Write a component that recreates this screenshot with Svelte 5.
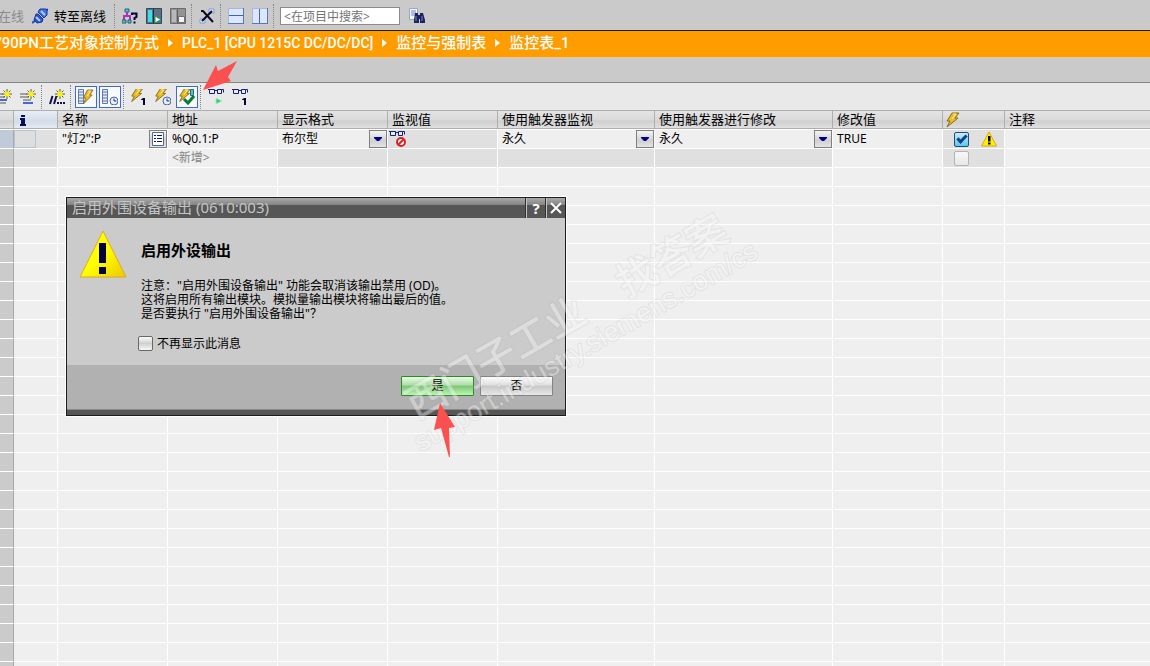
<script>
  let search = $state('');
  let enabled = $state(true);
  let enabledNew = $state(false);
  let dontShow = $state(false);
  let format = $state('布尔型');
  let monitor = $state('永久');
  let modify = $state('永久');

  const crumbs = [
    { text: 'V90PN工艺对象控制方式' },
    { text: 'PLC_1 [CPU 1215C DC/DC/DC]', device: true },
    { text: '监控与强制表' },
    { text: '监控表_1' }
  ];
  const widths = [14, 44, 110, 110, 110, 110, 157, 178, 110, 62];
  const emptyRows = Array.from({ length: 27 }, (_, i) => i);
</script>

{#snippet bolt()}
  <path d="M8 1h7l-4 5h3L3 15l3-6H3z" fill="#e8bd24" stroke="#8a6a12" />
  <path d="M9 2h3L8 7" fill="none" stroke="#fff3a0" />
{/snippet}

{#snippet star()}
  <path d="M11 0v10M6 5h10M7.500 1.500l7 7M14.500 1.500l-7 7" stroke="#5c6414" />
  <circle cx="11" cy="5" r="2.500" fill="#fff200" />
{/snippet}

{#snippet clock()}
  <circle cx="12" cy="12" r="4" fill="#e8f0ff" stroke="#4460b8" />
  <path d="M12 9.500V12h2.500" fill="none" stroke="#203080" />
{/snippet}

{#snippet glasses()}
  <path
    d="M1.500 2.500h5v4h-5zM9.500 2.500h4v4h-4zM6.500 3.500h3M13.500 2.500h2v3M1.500 2.500H0"
    fill="#e8ecff"
    stroke="#14206c"
  />
{/snippet}

{#snippet one()}
  <path d="M10 10.500l2-1.500h2v7h-2v-5h-2z" fill="#05053c" />
{/snippet}

{#snippet warning()}
  <path d="M8 1l7.500 14H.5z" fill="#fff000" stroke="#d8a810" />
  <path d="M7 5h2.500v5.500H7zM7 11.500h2.500v2H7z" fill="#04043c" />
{/snippet}

{#snippet combo(label, value, set)}
  <div class="combo">
    <select aria-label={label} {value} onchange={(ev) => set(ev.currentTarget.value)}>
      <option>{value}</option>
    </select>
    <span class="drop"><svg viewBox="0 0 16 16"><path d="M4 6h8v1l-3 3H7L4 7z" fill="#00008c" /></svg></span>
  </div>
{/snippet}

<main>
  <div class="toolbar top">
    <button class="text muted">在线</button>
    <button class="tool" aria-label="连接">
      <svg viewBox="0 0 16 16">
        <path d="M0 15l4-3M13 4l3-3" stroke="#2848b8" stroke-width="2" />
        <path d="M8 1l6 0 1 1v5l-3 3-6-6z" fill="#3c70e8" stroke="#1c3498" />
        <path d="M4 6l2 0 5 5-1 3-5 1-3-3z" fill="#2c54cc" stroke="#1c3498" />
        <path d="M4 9l4 4M9 3l4 4" stroke="#a8ccff" stroke-width="2" />
      </svg>
    </button>
    <button class="text">转至离线</button>
    <span class="sep"></span>
    <button class="tool" aria-label="可访问的设备">
      <svg viewBox="0 0 16 16">
        <path d="M3 1h4v3H3z" fill="#48c8d8" stroke="#186878" />
        <path d="M5 4v4M2 12V8h6v4" fill="none" stroke="#b030b8" stroke-width="2" />
        <path d="M0 12h4v3H0zM6 12h3v3H6z" fill="#50c8d8" stroke="#206070" />
        <path d="M10 7V5.500h4.500v3.500L12.500 10v2M12.500 13.500v2" fill="none" stroke="#05053c" stroke-width="2" />
      </svg>
    </button>
    <button class="tool" aria-label="启动 CPU">
      <svg viewBox="0 0 16 16">
        <path d="M.5.5h15v15H.5z" fill="#5c7084" stroke="#34485c" />
        <path d="M2 2h4v12H2z" fill="#40dcec" />
        <path d="M7.500 1v14" stroke="#1c2c40" />
        <path d="M9 8l6 3.500L9 15z" fill="#fff" stroke="#14a040" />
      </svg>
    </button>
    <button class="tool" aria-label="停止 CPU" disabled>
      <svg viewBox="0 0 16 16">
        <path d="M.5.5h15v15H.5z" fill="#949494" stroke="#6c6c6c" />
        <path d="M2 2h4v12H2z" fill="#b8b8b8" />
        <path d="M7.500 1v14" stroke="#606060" />
        <path d="M8.500 8.500h6v6h-6z" fill="#f4f4f4" stroke="#707070" />
      </svg>
    </button>
    <span class="sep"></span>
    <button class="tool" aria-label="交叉引用">
      <svg viewBox="0 0 16 16">
        <path d="M10 1h5v4h-5zM1 11h5v4H1z" fill="#e8eeff" stroke="#8098d0" />
        <path d="M2 3h2l10 11M13 3L3 13" fill="none" stroke="#080824" stroke-width="2" />
      </svg>
    </button>
    <span class="sep"></span>
    <button class="tool" aria-label="水平拆分">
      <svg viewBox="0 0 16 16">
        <path d="M.5.5h15v15H.5z" fill="#dce6fc" stroke="#a8b8dc" />
        <path d="M0 15.500h16M15.500 0v16" stroke="#5c74bc" />
        <path d="M1 7.500h14" stroke="#4060b0" />
      </svg>
    </button>
    <button class="tool" aria-label="垂直拆分">
      <svg viewBox="0 0 16 16">
        <path d="M.5.5h15v15H.5z" fill="#dce6fc" stroke="#a8b8dc" />
        <path d="M0 15.500h16M15.500 0v16" stroke="#5c74bc" />
        <path d="M7.500 1v14" stroke="#4060b0" />
      </svg>
    </button>
    <span class="sep"></span>
    <input class="search" type="text" aria-label="搜索" placeholder="<在项目中搜索>" bind:value={search} />
    <button class="tool" aria-label="查找">
      <svg viewBox="0 0 16 16">
        <path d="M.5.500h8v11h-8z" fill="#f4f8ff" stroke="#98a8c8" />
        <path d="M2 3h5M2 5h5M2 7h4" stroke="#6c84b8" />
        <path d="M6 5h3v2h2V5h3l2 7v3h-5v-4h-1v4H5v-3z" fill="#1c2460" />
        <path d="M7 8v5M13 8v5" stroke="#7088c8" />
      </svg>
    </button>
  </div>

  <nav class="crumbs" aria-label="路径">
    {#each crumbs as crumb, i (crumb.text)}
      {#if i > 0}
        <svg class="arrow" viewBox="0 0 5 8"><path d="M0 0l5 4-5 4z" fill="#fff" /></svg>
      {/if}
      <a href="#{i}" class:device={crumb.device}>{crumb.text}</a>
    {/each}
  </nav>

  <div class="band"></div>

  <div class="toolbar watch">
    <button class="tool" aria-label="插入行">
      <svg viewBox="0 0 16 16">
        <path d="M0 5h7M0 8h9M0 14h10" stroke="#a0a0a0" stroke-width="2" />
        <path d="M0 11h11" stroke="#4468e0" stroke-width="2" />
        {@render star()}
      </svg>
    </button>
    <button class="tool" aria-label="添加行">
      <svg viewBox="0 0 16 16">
        <path d="M0 5h7M0 8h9M3 11h8" stroke="#a0a0a0" stroke-width="2" />
        <path d="M3 14h10" stroke="#4468e0" stroke-width="2" />
        {@render star()}
      </svg>
    </button>
    <span class="sep"></span>
    <button class="tool" aria-label="插入注释行">
      <svg viewBox="0 0 16 16">
        <path d="M3.500 7L1 15M7.500 7L5 15M8 14h2M11 14h2M14 14h2" stroke="#101048" stroke-width="2" />
        {@render star()}
      </svg>
    </button>
    <span class="sep"></span>
    <button class="tool active" aria-label="显示修改列" aria-pressed="true">
      <svg viewBox="0 0 16 16">
        <path d="M.5.500h5v14h-5z" fill="#e0e8f8" stroke="#6078a8" />
        <path d="M1 3h4M1 6h4M1 9h4M1 12h4" stroke="#6078a8" />
        <g transform="translate(3 0) scale(.8 1)">{@render bolt()}</g>
      </svg>
    </button>
    <button class="tool active" aria-label="显示扩展模式列" aria-pressed="true">
      <svg viewBox="0 0 16 16">
        <path d="M.5.500h5v14h-5z" fill="#e0e8f8" stroke="#6078a8" />
        <path d="M1 3h4M1 6h4M1 9h4M1 12h4" stroke="#6078a8" />
        {@render clock()}
      </svg>
    </button>
    <span class="sep"></span>
    <button class="tool" aria-label="立即一次性修改">
      <svg viewBox="0 0 16 16">
        <g transform="translate(-2 -1) scale(.9)">{@render bolt()}</g>
        {@render one()}
      </svg>
    </button>
    <button class="tool" aria-label="使用触发器修改">
      <svg viewBox="0 0 16 16">
        <g transform="translate(-2 -1) scale(.9)">{@render bolt()}</g>
        {@render clock()}
      </svg>
    </button>
    <button class="tool active" aria-label="启用外围设备输出" aria-pressed="true">
      <svg viewBox="0 0 16 16">
        <path d="M11.500.5h3v6h-3z" fill="#40c8dc" stroke="#286878" />
        <g transform="translate(-2 -1) scale(.9)">{@render bolt()}</g>
        <path d="M5 10l4 4 6-7" fill="none" stroke="#0a7c2c" stroke-width="3" />
      </svg>
    </button>
    <span class="sep"></span>
    <button class="tool" aria-label="全部监视">
      <svg viewBox="0 0 16 16">
        <g transform="translate(0 -2)">{@render glasses()}</g>
        <path d="M8 9l6 3-6 3z" fill="#28d070" stroke="#b0e8c8" />
      </svg>
    </button>
    <button class="tool" aria-label="立即一次性监视">
      <svg viewBox="0 0 16 16">
        <g transform="translate(0 -2)">{@render glasses()}</g>
        {@render one()}
      </svg>
    </button>
  </div>

  <table>
    <colgroup>
      {#each widths as width}
        <col style="width: {width}px" />
      {/each}
      <col />
    </colgroup>
    <thead>
      <tr>
        <th></th>
        <th class="info">
          <svg viewBox="0 0 16 16">
            <path d="M7 3h4v2H7zM6 6h5v6h1v2H6v-2h1V8H6z" fill="#081058" />
          </svg>
        </th>
        <th>名称</th>
        <th>地址</th>
        <th>显示格式</th>
        <th>监视值</th>
        <th>使用触发器监视</th>
        <th>使用触发器进行修改</th>
        <th>修改值</th>
        <th class="flash"><svg viewBox="0 0 16 16">{@render bolt()}</svg></th>
        <th>注释</th>
      </tr>
    </thead>
    <tbody>
      <tr>
        <td class="gutter current"></td>
        <td class="off"><div class="mark"></div></td>
        <td>
          <div class="name">
            <span>"灯2":P</span>
            <button aria-label="选择变量">
              <svg viewBox="0 0 16 16">
                <path d="M2.500 1.500h11v13h-11z" fill="#fff" stroke="#5068a0" />
                <path d="M4 4.500h2M4 7.500h2M4 10.500h2M7 4.500h5M7 7.500h5M7 10.500h5" stroke="#101870" />
              </svg>
            </button>
          </div>
        </td>
        <td>%Q0.1:P</td>
        <td>{@render combo('显示格式', format, (v) => (format = v))}</td>
        <td class="off monitor">
          <svg viewBox="0 0 18 18">
            <g transform="translate(1 -1)">{@render glasses()}</g>
            <circle cx="13" cy="12" r="4" fill="#fff" stroke="#e02020" stroke-width="2" />
            <path d="M10 15l6-6" stroke="#e02020" stroke-width="2" />
          </svg>
        </td>
        <td>{@render combo('使用触发器监视', monitor, (v) => (monitor = v))}</td>
        <td>{@render combo('使用触发器进行修改', modify, (v) => (modify = v))}</td>
        <td>TRUE</td>
        <td class="off">
          <div class="checks">
            <input type="checkbox" aria-label="修改" bind:checked={enabled} />
            <svg viewBox="0 0 16 16">{@render warning()}</svg>
          </div>
        </td>
        <td></td>
      </tr>
      <tr>
        <td class="gutter"></td>
        <td class="off"></td>
        <td></td>
        <td class="hint">&lt;新增&gt;</td>
        <td class="off"></td>
        <td class="off"></td>
        <td class="off"></td>
        <td class="off"></td>
        <td></td>
        <td class="off">
          <div class="checks">
            <input type="checkbox" aria-label="修改新行" disabled bind:checked={enabledNew} />
          </div>
        </td>
        <td></td>
      </tr>
      {#each emptyRows as row (row)}
        <tr>
          <td class="gutter"></td>
          {#each widths as _}
            <td></td>
          {/each}
        </tr>
      {/each}
    </tbody>
  </table>

  <div class="dialog" role="dialog" aria-labelledby="dialog-title">
    <header>
      <span id="dialog-title">启用外围设备输出 (0610:003)</span>
      <button aria-label="帮助">?</button>
      <button aria-label="关闭">
        <svg viewBox="0 0 16 16"><path d="M3 3l10 10M13 3L3 13" stroke="#fff" stroke-width="2" /></svg>
      </button>
    </header>
    <div class="body">
      <svg class="alert" viewBox="0 0 48 48">
        <defs>
          <linearGradient id="alert-fill" x1="0" y1="0" x2="1" y2="1">
            <stop offset="0.500" stop-color="#ffff00" />
            <stop offset="1" stop-color="#ecc800" />
          </linearGradient>
        </defs>
        <path d="M24 1l23 46H1z" fill="url(#alert-fill)" stroke="#e0a820" />
        <path d="M20 13h7v20h-7zM20 37h7v7h-7z" fill="#04043c" />
      </svg>
      <div class="message">
        <h2>启用外设输出</h2>
        <p>
          注意："启用外围设备输出" 功能会取消该输出禁用 (OD)。<br />
          这将启用所有输出模块。模拟量输出模块将输出最后的值。<br />
          是否要执行 "启用外围设备输出"？
        </p>
        <label><input type="checkbox" bind:checked={dontShow} />不再显示此消息</label>
      </div>
    </div>
    <footer>
      <button class="yes">是</button>
      <button>否</button>
    </footer>
  </div>

  <svg class="watermark" viewBox="0 0 400 280" aria-hidden="true">
    <g transform="translate(21 252) rotate(-30)">
      <text class="cn" x="12" y="-30">西门子工业</text>
      <text class="cn" x="255" y="-30">找答案</text>
      <text class="url" x="0" y="0">support.industry.siemens.com/cs</text>
    </g>
  </svg>

  <svg class="pointer output" viewBox="0 0 36 32" aria-hidden="true">
    <path d="M1 30L14 5l2 6L35 1l-9 16 3 4z" />
  </svg>
  <svg class="pointer confirm" viewBox="0 0 24 58" aria-hidden="true">
    <path d="M7 2l15 24-6 1 1 29h-1L8 27l-7 2z" />
  </svg>
</main>

<style>
  :global(body) {
    margin: 0;
    background: #efefef;
  }

  main {
    position: relative;
    height: 100vh;
    overflow: hidden;
    background: #efefef;
    color: #000;
    font: 13px/18px 'Noto Sans', 'Noto Sans CJK SC', sans-serif;
  }

  svg {
    display: block;
    width: 16px;
    height: 16px;
    flex: none;
    fill: none;
  }

  button {
    margin: 0;
    padding: 0;
    border: 0;
    background: none;
    color: inherit;
    font: inherit;
  }

  .toolbar {
    display: flex;
    align-items: center;
    box-sizing: border-box;
  }

  .top {
    height: 31px;
    padding-top: 2px;
    background: #cacaca;
    border-bottom: 1px solid #182030;
  }

  .text {
    padding: 0 7px 0 2px;
  }

  .text.muted {
    padding: 0 2px 0 0;
    color: #8a8a8a;
    margin-left: -2px;
    margin-right: 2px;
  }

  .tool {
    display: flex;
    align-items: center;
    justify-content: center;
    box-sizing: border-box;
    width: 24px;
    height: 24px;
  }

  .tool.active {
    width: 22px;
    height: 22px;
    margin: 0 1px;
    background: #f8faff;
    border: 1px solid #3c6cd0;
  }

  .sep {
    width: 4px;
    height: 24px;
    margin-left: 1px;
    box-sizing: border-box;
    border-left: 1px dotted #848484;
  }

  .search {
    width: 120px;
    height: 18px;
    box-sizing: border-box;
    margin: 0 5px 0 3px;
    padding: 0 3px;
    border: 1px solid #8a8a8a;
    background: #fff;
    font: 12px/16px 'Noto Sans', 'Noto Sans CJK SC', sans-serif;
  }

  .search::placeholder {
    color: #747474;
    opacity: 1;
  }

  .crumbs {
    display: flex;
    align-items: center;
    box-sizing: border-box;
    height: 27px;
    padding-bottom: 2px;
    margin-left: -8px;
    background: #ff9c00;
    border-bottom: 1px solid #e8c890;
    color: #fff;
    font-family: Roboto, 'Noto Sans CJK SC', sans-serif;
    font-size: 15px;
    font-weight: 500;
    white-space: nowrap;
  }

  .crumbs a {
    color: inherit;
    text-decoration: none;
  }

  .crumbs .device {
    font-size: 14px;
  }

  .arrow {
    width: 5px;
    height: 8px;
    margin: 0 9px;
  }

  .band {
    height: 24px;
    background: #cacaca;
    border-bottom: 1px solid #848484;
  }

  .watch {
    height: 27px;
    margin-left: -8px;
    background: #e9e9e9;
  }

  table {
    width: 100%;
    table-layout: fixed;
    border-collapse: separate;
    border-spacing: 0;
  }

  th {
    height: 17px;
    padding: 0 4px;
    border: solid #aeaeae;
    border-width: 1px 1px 1px 0;
    background: linear-gradient(#e4e4e4, #dadada 50%, #cfcfcf 60%, #e0e0e0);
    font-weight: 400;
    line-height: 17px;
    text-align: left;
    white-space: nowrap;
  }

  th:last-child {
    border-right: 0;
  }

  th.info {
    padding: 0;
    background: linear-gradient(#e8eef6, #d4dce8 60%, #e4eaf4);
  }

  th.flash {
    padding: 0 1px;
  }

  td {
    height: 18px;
    padding: 0 0 0 4px;
    border: solid #fff;
    border-width: 0 1px 1px 0;
    line-height: 18px;
    white-space: nowrap;
  }

  td:last-child {
    border-right: 0;
  }

  tbody tr:first-child td {
    border-top-width: 1px;
    font-size: 12px;
  }

  td.gutter {
    background: #cbcbcb;
    border-right-color: #a8a8a8;
  }

  td.current {
    background: #bfcbd8;
  }

  td.off {
    background: #e0e0e0;
  }

  td.off:nth-child(2),
  td.monitor {
    padding: 0;
  }

  td.monitor svg {
    width: 18px;
    height: 18px;
  }

  td.hint {
    color: #848484;
    font-size: 12px;
  }

  .mark {
    width: 20px;
    height: 16px;
    border: 1px solid #b8c4d0;
    background: #dedede;
  }

  .name {
    display: flex;
    align-items: center;
    justify-content: space-between;
    height: 18px;
  }

  .name button,
  .drop {
    box-sizing: border-box;
    width: 18px;
    height: 18px;
    border: 1px solid #808080;
    background: linear-gradient(#f4f4f4, #d0d0d0 60%, #e4e4e4);
  }

  .combo {
    display: grid;
    grid-template-columns: 1fr 18px;
    height: 18px;
  }

  .combo select {
    grid-area: 1 / 1 / 2 / 3;
    appearance: none;
    margin: 0;
    padding: 0;
    border: 0;
    border-radius: 0;
    background: none;
    color: inherit;
    font: 12px/18px 'Noto Sans', 'Noto Sans CJK SC', sans-serif;
  }

  .drop {
    grid-area: 1 / 2;
    pointer-events: none;
  }

  .checks {
    display: flex;
    align-items: center;
    gap: 12px;
    height: 18px;
    padding-left: 7px;
  }

  input[type='checkbox'] {
    appearance: none;
    box-sizing: border-box;
    width: 15px;
    height: 15px;
    margin: 0;
    border: 1px solid #686868;
    border-radius: 2px;
    background: linear-gradient(#fcfcfc, #d0d0d0 50%, #f8f8f8);
  }

  input[type='checkbox']:disabled {
    border-color: #b4b4b4;
    background: linear-gradient(#f8f8f8, #e8e8e8);
  }

  input[type='checkbox']:checked {
    border-color: #205070;
    background: linear-gradient(#d0e8f8, #58c8f0);
  }

  input[type='checkbox']:checked::after {
    content: '';
    display: block;
    width: 3px;
    height: 7px;
    margin: 0 auto;
    border: solid #0c4488;
    border-width: 0 3px 3px 0;
    transform: rotate(45deg);
  }

  .dialog {
    position: absolute;
    top: 197px;
    left: 66px;
    width: 498px;
    border: 1px solid #1c1c1c;
    box-shadow: 0 0 0 1px #fff;
    background: #cbcbcb;
  }

  .dialog header {
    display: flex;
    height: 20px;
    background: linear-gradient(#a8a8a8, #848484 7px, #565656 7px);
    color: #c4c4c4;
    font-size: 15px;
    line-height: 18px;
  }

  .dialog header span {
    flex: 1;
    padding-left: 5px;
  }

  .dialog header button {
    display: flex;
    align-items: center;
    justify-content: center;
    box-sizing: border-box;
    width: 19px;
    border-left: 1px solid #c4c4c4;
    box-shadow: -1px 0 #303030;
    color: #fff;
    font-weight: 700;
  }

  .dialog header button + button {
    margin-left: 1px;
  }

  .body {
    display: flex;
    gap: 14px;
    padding: 12px 12px 14px;
  }

  .alert {
    width: 48px;
    height: 48px;
  }

  .message {
    padding-top: 10px;
    font-size: 12px;
    line-height: 14px;
  }

  h2 {
    margin: 0 0 19px;
    font-size: 15px;
    line-height: 20px;
  }

  p {
    margin: 0 0 15px;
  }

  label {
    display: flex;
    align-items: center;
    gap: 4px;
    margin-left: -3px;
  }

  .dialog footer {
    display: flex;
    justify-content: flex-end;
    gap: 6px;
    padding: 11px 12px 14px;
    background: #b1b1b1;
    border-bottom: 5px solid #565656;
    box-shadow: inset 0 -1px #888;
  }

  .dialog footer button {
    box-sizing: border-box;
    width: 73px;
    height: 20px;
    border: 1px solid #848484;
    border-radius: 1px;
    background: linear-gradient(#fcfcfc, #e0e0e0 45%, #c8c8c8 50%, #e8e8e8);
    font-size: 12px;
    line-height: 18px;
  }

  .dialog footer .yes {
    border-color: #2c8c24;
    background: linear-gradient(#e8fce4, #b0dca8 45%, #78c870 50%, #c0f4b8);
  }

  .watermark {
    position: absolute;
    top: 200px;
    left: 400px;
    width: 400px;
    height: 280px;
    pointer-events: none;
  }

  .watermark text {
    fill: #f8f8f8;
    stroke: #a0a0a0;
    stroke-opacity: 0.4;
    stroke-width: 2px;
    paint-order: stroke;
    opacity: 0.4;
  }

  .cn {
    font-family: 'Noto Sans CJK SC', sans-serif;
    font-size: 40px;
    font-weight: 500;
  }

  .url {
    font-family: 'Liberation Sans', sans-serif;
    font-size: 27px;
  }

  .pointer {
    position: absolute;
    fill: #fc5050;
    pointer-events: none;
  }

  .output {
    top: 60px;
    left: 202px;
    width: 36px;
    height: 32px;
  }

  .confirm {
    top: 401px;
    left: 433px;
    width: 24px;
    height: 58px;
  }
</style>
